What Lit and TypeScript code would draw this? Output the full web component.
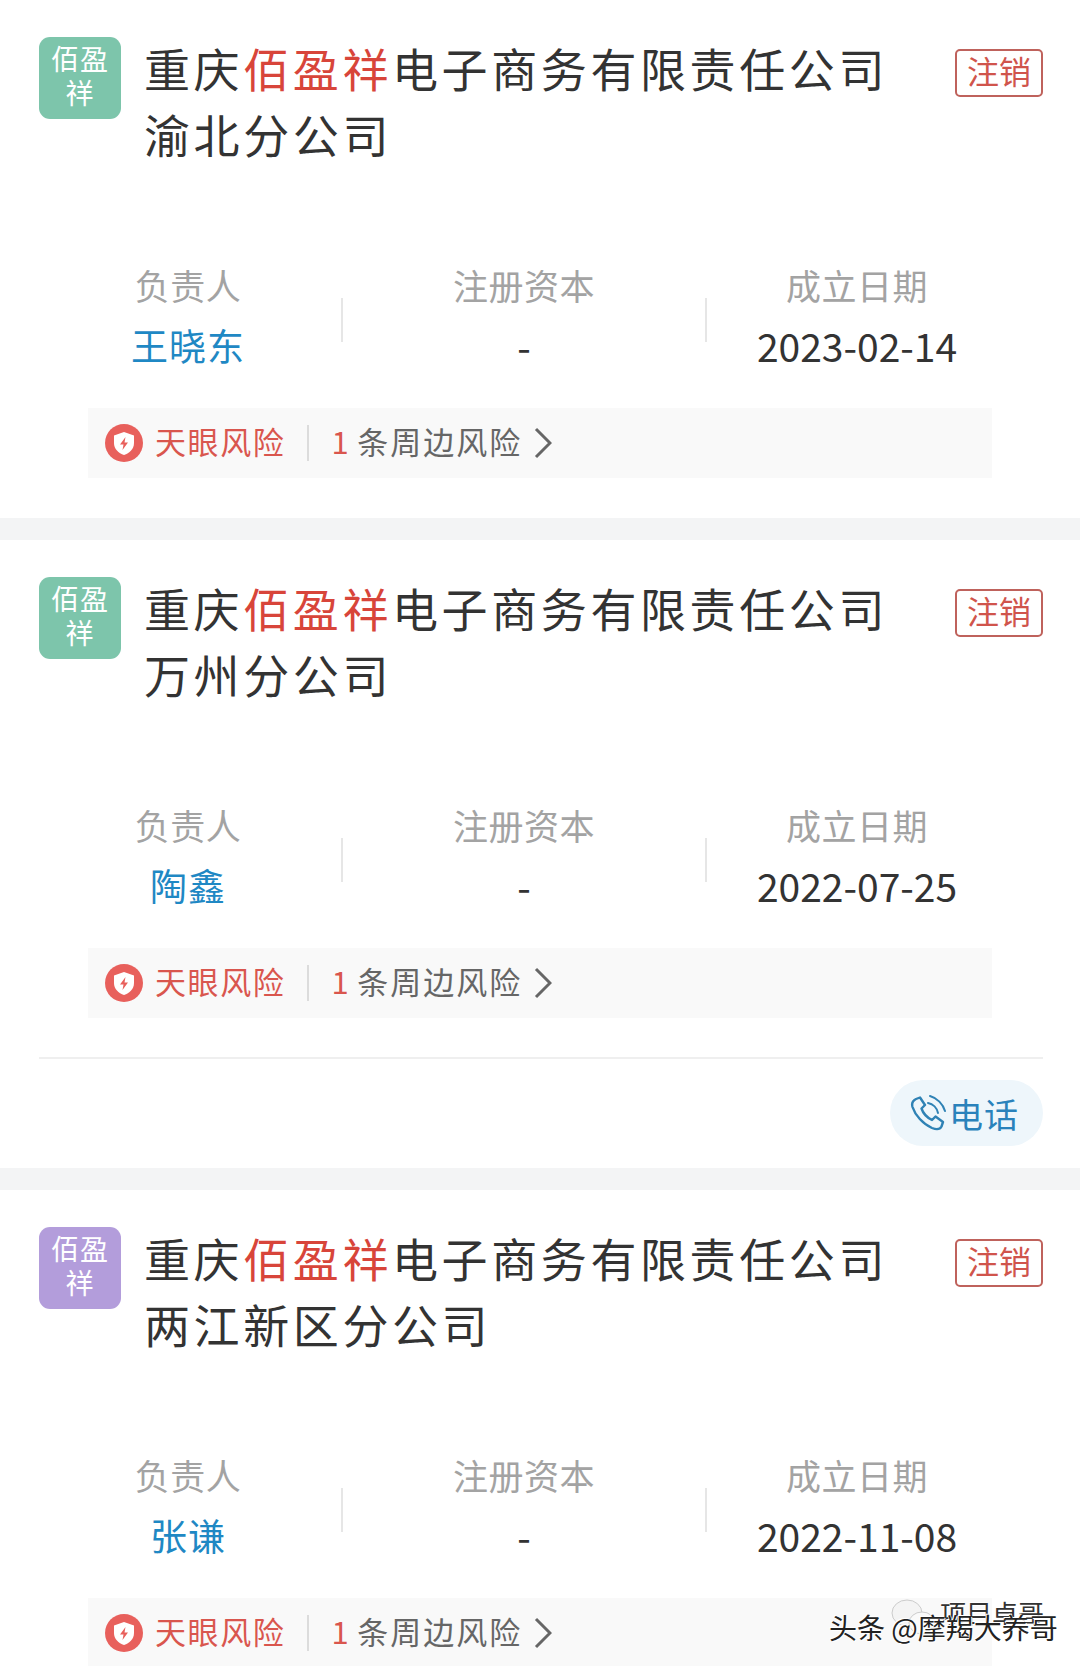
import { html, css, LitElement, svg } from "lit"
import { customElement } from "lit/decorators.js"

interface Branch {
  suffix: string
  color: string
  person: string
  date: string
  phone?: boolean
}

const branches: Branch[] = [
  { suffix: "渝北分公司", color: "#7dc5ab", person: "王晓东", date: "2023-02-14" },
  { suffix: "万州分公司", color: "#7dc5ab", person: "陶鑫", date: "2022-07-25", phone: true },
  { suffix: "两江新区分公司", color: "#b39ddb", person: "张谦", date: "2022-11-08" },
]

const shield = svg`
  <circle cx="19" cy="19" r="19" fill="#e8605c" />
  <path d="M19 8 L29 11.5 V19 C29 25 24.5 29 19 31 C13.5 29 9 25 9 19 V11.5 Z" fill="#fff" />
  <path d="M20.5 13 L15 20.5 H18.5 L17.5 26 L23 18.5 H19.5 Z" fill="#e8605c" />
`

const phoneIcon = svg`
  <path d="M8 5 L12 3.5 L17 11 L13.5 14.5 C15 19 19 23.5 24 26 L27.5 22.5 L35 28 L33.5 32.5 C32 35.5 28 35.5 24 34 C15 30 7 21 4.5 13 C3.5 9.5 5 6.5 8 5 Z"
    fill="none" stroke="#2f82b5" stroke-width="2.4" stroke-linejoin="round" />
  <path d="M20 9 C25 10 29 14 30 19" fill="none" stroke="#2f82b5" stroke-width="2" stroke-linecap="round" />
  <path d="M22 2 C29 4 35 10 37 17" fill="none" stroke="#2f82b5" stroke-width="2" stroke-linecap="round" />
`

@customElement("app-root")
export default class AppRoot extends LitElement {
  static styles = css`
    :host {
      display: block;
      position: relative;
      height: 1666px;
      overflow: hidden;
      background: #f3f4f5;
      font-family: "Noto Sans CJK SC", "Noto Sans", sans-serif;
    }

    .card {
      background: #fff;
      padding: 37px 37px 0 39px;
      height: 481px;
      margin-bottom: 22px;
    }

    .card.has-phone {
      height: 591px;
    }

    .head {
      display: flex;
      align-items: flex-start;
    }

    .logo {
      flex: none;
      width: 82px;
      height: 82px;
      box-sizing: border-box;
      padding-top: 4px;
      border-radius: 11px;
      color: #fff;
      font-size: 28px;
      line-height: 34px;
      text-align: center;
      letter-spacing: 1px;
    }

    .title {
      flex: 1;
      margin: -3px 0 0 23px;
      color: #333;
      font-size: 46px;
      line-height: 66px;
      letter-spacing: 3.6px;
    }

    .title em {
      color: #d8453a;
      font-style: normal;
    }

    .tag {
      flex: none;
      width: 88px;
      height: 48px;
      box-sizing: border-box;
      margin-top: 12px;
      border: 2px solid #bf625c;
      border-radius: 5px;
      color: #d0544c;
      font-size: 32px;
      line-height: 39px;
      text-align: center;
    }

    .stats {
      display: grid;
      grid-template-columns: 306px 2px 362px 2px 300px;
      margin: 97px 0 0 -4px;
      text-align: center;
    }

    .stat {
      display: flex;
      flex-direction: column;
      gap: 16px;
      line-height: 44px;
    }

    .stat-line {
      align-self: start;
      height: 44px;
      margin-top: 35px;
      background: #e6e6e6;
    }

    .label {
      color: #a3a3a3;
      font-size: 35px;
      letter-spacing: 0.5px;
    }

    .value {
      color: #333;
      font-size: 39px;
    }

    .value.person {
      color: #1f88c4;
      font-size: 37px;
      letter-spacing: 1px;
    }

    .risk {
      display: flex;
      align-items: center;
      height: 70px;
      margin: 41px 51px 0 49px;
      padding-left: 17px;
      background: #f9f9f9;
      font-size: 31px;
      letter-spacing: 1.6px;
    }

    .risk svg {
      flex: none;
      width: 38px;
      height: 38px;
    }

    .risk span {
      margin-bottom: 6px;
    }

    .risk-name {
      margin-left: 12px;
      color: #d9564e;
    }

    .risk .risk-line {
      width: 2px;
      height: 36px;
      margin: 0 22px;
      background: #dcdcdc;
    }

    .risk-count {
      margin-right: 7px;
      color: #d9564e;
    }

    .risk-text {
      color: #666;
      letter-spacing: 2px;
    }

    .risk .chevron {
      width: 18px;
      height: 32px;
      margin-left: 12px;
    }

    .foot {
      margin-top: 39px;
      border-top: 2px solid #efefef;
      display: flex;
      justify-content: flex-end;
      padding-top: 21px;
    }

    .call {
      display: flex;
      align-items: center;
      gap: 3px;
      width: 153px;
      height: 66px;
      box-sizing: border-box;
      padding-left: 18px;
      border-radius: 33px;
      background: #eef6fb;
      color: #2a82bb;
      font-size: 34px;
      letter-spacing: 1px;
    }

    .call svg {
      width: 38px;
      height: 38px;
      flex: none;
    }

    .mark {
      position: absolute;
      left: 829px;
      top: 1609px;
      color: #222;
      font-size: 28px;
      line-height: 36px;
      white-space: nowrap;
      text-shadow: 1px 1px 0 #fff, -1px -1px 0 #fff;
    }

    .mark-top {
      position: absolute;
      left: 940px;
      top: 1596px;
      color: #333;
      font-size: 26px;
      line-height: 34px;
      white-space: nowrap;
      text-shadow: 1px 1px 0 #fff, -1px -1px 0 #fff;
    }

    .mark-icon {
      position: absolute;
      left: 888px;
      top: 1598px;
      width: 50px;
      height: 40px;
    }
  `

  private renderCard(b: Branch) {
    return html`
      <div class="card ${b.phone ? "has-phone" : ""}">
        <div class="head">
          <div class="logo" style="background: ${b.color}">佰盈<br />祥</div>
          <div class="title">重庆<em>佰盈祥</em>电子商务有限责任公司<br />${b.suffix}</div>
          <div class="tag">注销</div>
        </div>
        <div class="stats">
          <div class="stat">
            <div class="label">负责人</div>
            <div class="value person">${b.person}</div>
          </div>
          <div class="stat-line"></div>
          <div class="stat">
            <div class="label">注册资本</div>
            <div class="value">-</div>
          </div>
          <div class="stat-line"></div>
          <div class="stat">
            <div class="label">成立日期</div>
            <div class="value">${b.date}</div>
          </div>
        </div>
        <div class="risk">
          <svg viewBox="0 0 38 38">${shield}</svg>
          <span class="risk-name">天眼风险</span>
          <span class="risk-line"></span>
          <span class="risk-count">1</span>
          <span class="risk-text">条周边风险</span>
          <svg class="chevron" viewBox="0 0 18 32">
            <path d="M2 2 L16 16 L2 30" fill="none" stroke="#666" stroke-width="3" />
          </svg>
        </div>
        ${b.phone
          ? html`<div class="foot">
              <div class="call">
                <svg viewBox="0 0 38 38">${phoneIcon}</svg>
                电话
              </div>
            </div>`
          : ""}
      </div>
    `
  }

  protected render() {
    return html`
      ${branches.map((b) => this.renderCard(b))}
      <svg class="mark-icon" viewBox="0 0 50 40">
        <ellipse cx="19" cy="15" rx="15" ry="13" fill="#f4f4f4" stroke="#ccc" />
        <ellipse cx="34" cy="25" rx="13" ry="11" fill="#fafafa" stroke="#ccc" />
      </svg>
      <div class="mark-top">项目卓哥</div>
      <div class="mark">头条 @摩羯大养哥</div>
    `
  }
}
